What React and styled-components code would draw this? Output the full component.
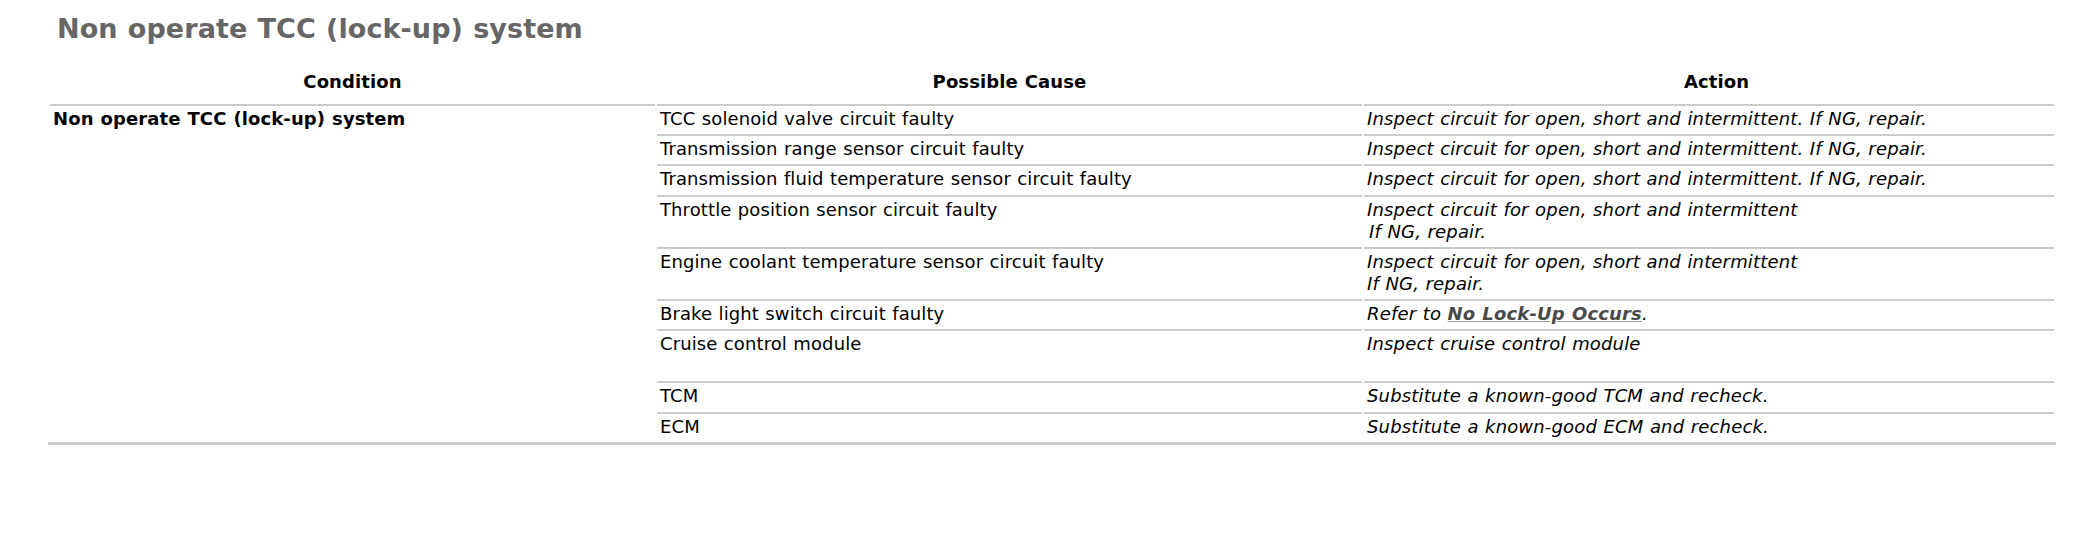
import React from "react";
import styled, { createGlobalStyle } from "styled-components";

const GlobalStyle = createGlobalStyle`
  html, body {
    margin: 0;
    padding: 0;
    background: #ffffff;
  }
  body {
    font-family: "DejaVu Sans", Verdana, sans-serif;
    color: #000000;
    word-spacing: 0.6px;
    letter-spacing: 0.1px;
  }
`;

const Page = styled.div`
  padding: 13px 0 0 0;
  width: 2100px;
`;

const Title = styled.h1`
  margin: 0 0 22px 0;
  padding-left: 57px;
  font-size: 27px;
  line-height: 32px;
  font-weight: bold;
  color: #666666;
`;

const Table = styled.table`
  margin-left: 48px;
  width: 2008px;
  table-layout: fixed;
  border-collapse: separate;
  border-spacing: 2px;
  border-bottom: 3px solid #cccccc;
  font-size: 18px;
  line-height: 22px;
`;

const Col = styled.col`
  width: ${(p) => p.$w}px;
`;

const HeadCell = styled.th`
  padding: 2px 3px 9px ${(p) => (p.$shift ? p.$shift : 3)}px;
  text-align: center;
  font-weight: bold;
  vertical-align: bottom;
`;

const Cell = styled.td`
  border-top: 2px solid #cbcbcb;
  padding: 2px 3px 2.2px 3px;
  vertical-align: top;
  font-style: ${(p) => (p.$italic ? "italic" : "normal")};
  font-weight: ${(p) => (p.$bold ? "bold" : "normal")};
  letter-spacing: ${(p) => (p.$italic ? "0.16px" : "0.1px")};
  white-space: nowrap;
`;

const Indent = styled.span`
  padding-left: ${(p) => p.$px}px;
`;

const Link = styled.a`
  font-weight: bold;
  color: #4a4a4a;
  text-decoration: underline;
  text-decoration-color: #9a9a9a;
`;

const repairFull = "Inspect circuit for open, short and intermittent. If NG, repair.";

const rows = [
  { cause: "TCC solenoid valve circuit faulty", action: [repairFull] },
  { cause: "Transmission range sensor circuit faulty", action: [repairFull] },
  { cause: "Transmission fluid temperature sensor circuit faulty", action: [repairFull] },
  {
    cause: "Throttle position sensor circuit faulty",
    action: ["Inspect circuit for open, short and intermittent", "If NG, repair."],
    indent: 2,
  },
  {
    cause: "Engine coolant temperature sensor circuit faulty",
    action: ["Inspect circuit for open, short and intermittent", "If NG, repair."],
  },
  { cause: "Brake light switch circuit faulty", link: true },
  { cause: "Cruise control module", action: ["Inspect cruise control module", "\u00a0"] },
  { cause: "TCM", action: ["Substitute a known-good TCM and recheck."] },
  { cause: "ECM", action: ["Substitute a known-good ECM and recheck."] },
];

function ActionText({ row }) {
  if (row.link) {
    return (
      <>
        Refer to <Link href="#">No Lock-Up Occurs</Link>.
      </>
    );
  }
  return row.action.map((line, i) => (
    <React.Fragment key={i}>
      {i > 0 && <br />}
      {i > 0 && row.indent ? <Indent $px={row.indent}>{line}</Indent> : line}
    </React.Fragment>
  ));
}

export default function App() {
  return (
    <Page>
      <GlobalStyle />
      <Title>Non operate TCC (lock-up) system</Title>
      <Table>
        <colgroup>
          <Col $w={605} />
          <Col $w={705} />
          <Col $w={690} />
        </colgroup>
        <thead>
          <tr>
            <HeadCell>Condition</HeadCell>
            <HeadCell>Possible Cause</HeadCell>
            <HeadCell $shift={18}>Action</HeadCell>
          </tr>
        </thead>
        <tbody>
          {rows.map((row, i) => (
            <tr key={i}>
              {i === 0 && (
                <Cell $bold rowSpan={rows.length}>
                  Non operate TCC (lock-up) system
                </Cell>
              )}
              <Cell>{row.cause}</Cell>
              <Cell $italic>
                <ActionText row={row} />
              </Cell>
            </tr>
          ))}
        </tbody>
      </Table>
    </Page>
  );
}
